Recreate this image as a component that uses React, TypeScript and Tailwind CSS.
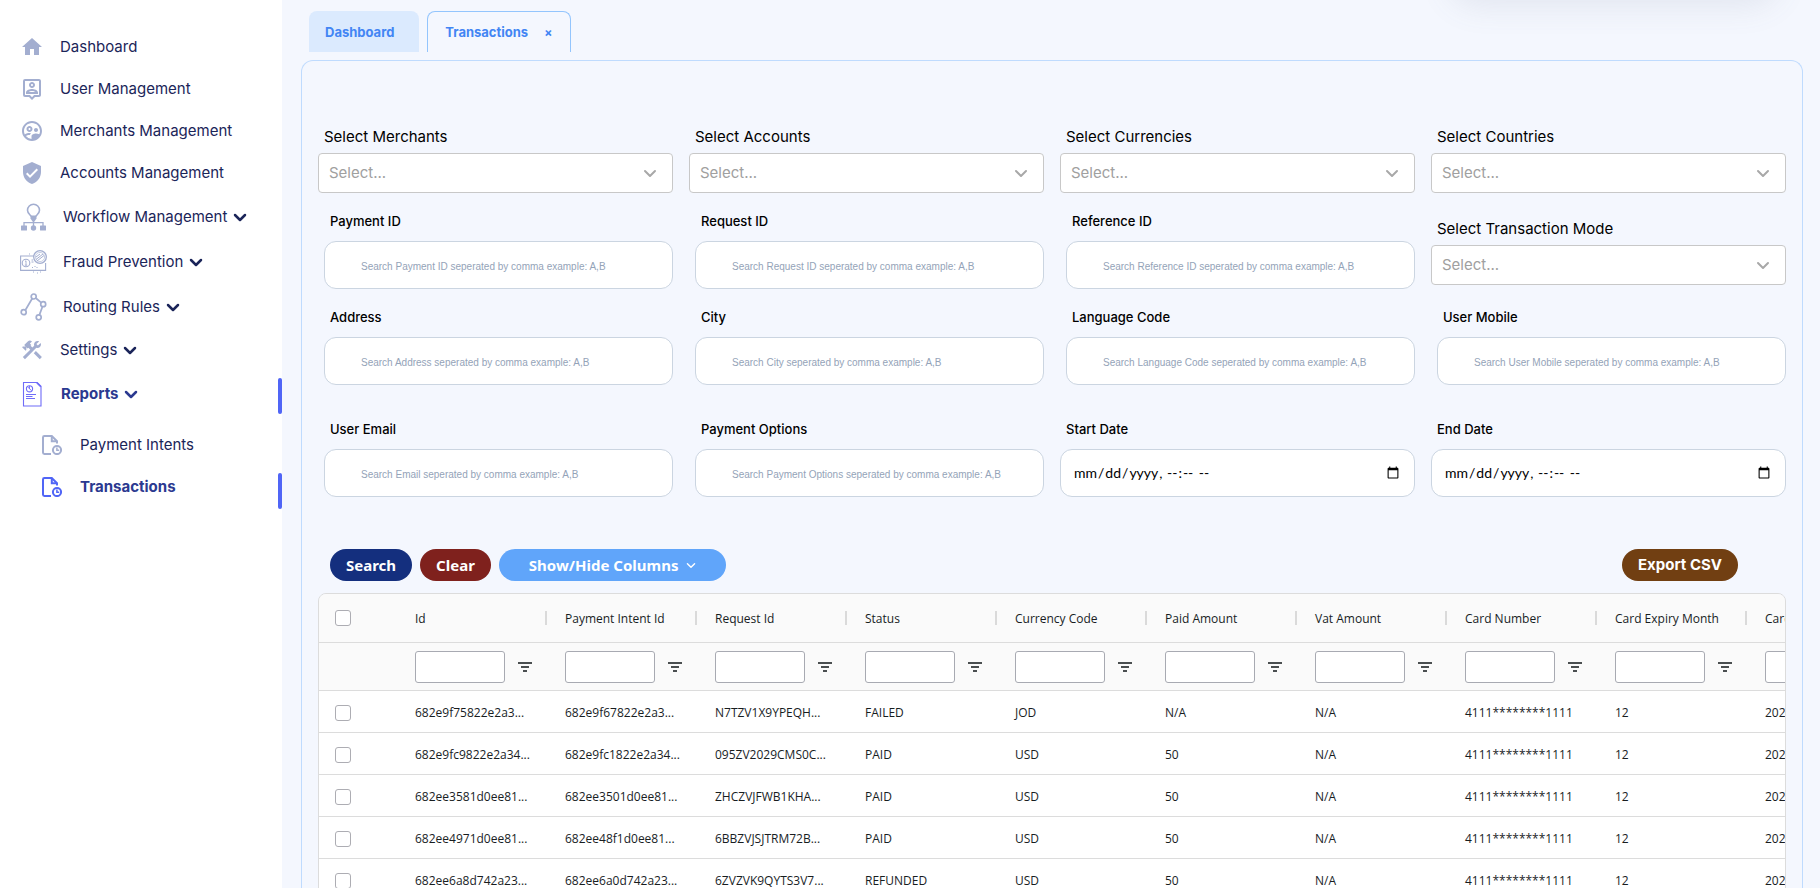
import type { ReactNode } from "react";
import {
  MdConstruction,
  MdHome,
  MdOutlinePersonPin,
  MdOutlineSupervisedUserCircle,
  MdVerifiedUser,
} from "react-icons/md";

function Chevron({ className }: { className?: string }) {
  return (
    <svg className={className} viewBox="0 0 14 9" fill="none" stroke="currentColor" strokeLinecap="round" strokeLinejoin="round" aria-hidden="true">
      <path d="M2 2l5 5 5-5" />
    </svg>
  );
}

function WorkflowIcon() {
  return (
    <svg className="h-[28px] w-[27px]" viewBox="0 0 27 28" fill="none" stroke="currentColor" aria-hidden="true">
      <path d="M11.2 13.6c-.3-1.700-3.700-2.800-3.700-6.300a6 6 0 0 1 12 0c0 3.500-3.400 4.600-3.700 6.300" strokeWidth="1.600" />
      <path d="M10.500 12.500h6v3l-2 3h-2l-2-3z" fill="currentColor" stroke="none" />
      <path d="M13.500 18v5M4 23v-3.300h19V23" strokeWidth="1.300" />
      <rect x="1" y="22.500" width="6" height="5" rx=".5" fill="currentColor" stroke="none" />
      <circle cx="13.500" cy="25" r="2.700" fill="currentColor" stroke="none" />
      <rect x="20" y="22.500" width="6" height="5" rx=".5" fill="currentColor" stroke="none" />
    </svg>
  );
}

function FraudIcon() {
  return (
    <svg className="h-[24px] w-[27px]" viewBox="0 0 27 24" fill="none" stroke="currentColor" aria-hidden="true">
      <path d="M14 6H.6v14.400h25V13" strokeWidth="1.100" />
      <circle cx="6" cy="13" r="3.800" strokeWidth="1.100" />
      <path d="M6 10.800v4.400M5 11.500l1-.7M4.800 15.200h2.400" strokeWidth=".9" />
      <circle cx="20" cy="7" r="6.300" strokeWidth="1.300" />
      <circle cx="20" cy="7" r="4.600" strokeWidth=".6" />
      <path d="M16 9.500l7-5.500M17 11l7-5.500M16 7l4-3" strokeWidth="1" />
      <path d="M11.500 10h1.500M11.500 12h2M12 17.500h1M14.500 16.500h1M16.500 17.500h1M9.500 3.500v1M17.500 22.500v1M13 22h1M20.500 21.500v1" strokeWidth="1" />
    </svg>
  );
}

function RoutingIcon() {
  return (
    <svg className="h-[28px] w-[27px]" viewBox="0 0 27 28" fill="none" stroke="currentColor" strokeWidth="1.700" aria-hidden="true">
      <circle cx="13.700" cy="3.500" r="2.500" />
      <circle cx="23.200" cy="11.200" r="2.500" />
      <circle cx="3.700" cy="19.200" r="2.500" />
      <circle cx="18.700" cy="24.300" r="2.500" />
      <path d="M12.200 5.500L5.300 17.200M15.700 5l5.500 4.600M22.500 13.600l-3.100 8.300" />
    </svg>
  );
}

function ReportIcon() {
  return (
    <svg className="h-[25px] w-[25px]" viewBox="0 0 25 25" fill="none" stroke="currentColor" aria-hidden="true">
      <path d="M3.500.5h13.700l3.800 3.800v19.700H3.500z" strokeWidth="1.100" />
      <path d="M16.800.7l4 4" strokeWidth="1.500" />
      <circle cx="9.500" cy="6.800" r="3.100" strokeWidth="1.100" />
      <path d="M7.500 4.800l4.200 4M9.500 6.800V4" strokeWidth=".9" />
      <path d="M6 12.500h10M6 14.500h6.500M6 16.500h9" strokeWidth="1" />
    </svg>
  );
}

function FileClockIcon() {
  return (
    <svg className="size-5" viewBox="0 0 20 20" fill="none" stroke="currentColor" strokeWidth="2" aria-hidden="true">
      <path d="M9 19H2.400A1.400 1.400 0 0 1 1 17.600V2.400A1.400 1.400 0 0 1 2.400 1h7.400L15 6.200v2.300" />
      <path d="M9.800 1v5.200h5.200" />
      <circle cx="15" cy="15" r="4.100" />
      <path d="M14.900 12.600v2.600h2.300" strokeWidth="1.500" />
    </svg>
  );
}

function FilterIcon() {
  return (
    <svg className="h-[10px] w-[14px]" viewBox="0 0 14 10" fill="currentColor" aria-hidden="true">
      <rect x="0" y="0" width="14" height="2" />
      <rect x="3" y="4" width="8" height="2" />
      <rect x="5" y="8" width="4" height="2" />
    </svg>
  );
}

type NavProps = { icon: ReactNode; label: string; expandable?: boolean; tall?: boolean; active?: boolean };

function NavItem({ icon, label, expandable, tall, active }: NavProps) {
  return (
    <li className="relative">
      <a
        href="#"
        className={`flex items-center gap-4 pl-5 ${tall ? "h-[45px] pt-px" : "h-[42px]"} ${active ? "font-bold text-[#2b3990]" : "text-[#1b2559]"}`}
      >
        <span className={active ? "text-[#6f6cf8]" : "text-[#a3aed0]"}>{icon}</span>
        <span className="flex items-center gap-1.5">
          {label}
          {expandable && <Chevron className="h-[9px] w-[14px] stroke-[2.500]" />}
        </span>
      </a>
      {active && <span className="absolute top-[7px] right-0 h-9 w-1 rounded-sm bg-[#5065f6]" />}
    </li>
  );
}

function SubNavItem({ label, active }: { label: string; active?: boolean }) {
  return (
    <li className="relative">
      <a
        href="#"
        className={`flex h-[42px] items-center gap-[18px] pl-[42px] ${active ? "font-bold text-[#2b3990]" : "text-[#1b2559]"}`}
      >
        <span className={active ? "text-[#5065f6]" : "text-[#a3aed0]"}>
          <FileClockIcon />
        </span>
        {label}
      </a>
      {active && <span className="absolute top-[7px] right-0 h-9 w-1 rounded-sm bg-[#5065f6]" />}
    </li>
  );
}

function Sidebar() {
  return (
    <nav className="w-[282px] shrink-0 bg-white pt-[26px] text-[15px]">
      <ul>
        <NavItem icon={<MdHome size={24} />} label="Dashboard" />
        <NavItem icon={<MdOutlinePersonPin size={24} />} label="User Management" />
        <NavItem icon={<MdOutlineSupervisedUserCircle size={24} />} label="Merchants Management" />
        <NavItem icon={<MdVerifiedUser size={24} />} label="Accounts Management" />
        <NavItem icon={<WorkflowIcon />} label="Workflow Management" expandable tall />
        <NavItem icon={<FraudIcon />} label="Fraud Prevention" expandable tall />
        <NavItem icon={<RoutingIcon />} label="Routing Rules" expandable tall />
        <NavItem icon={<MdConstruction size={24} />} label="Settings" expandable />
        <NavItem icon={<ReportIcon />} label="Reports" expandable tall active />
      </ul>
      <ul className="pt-2">
        <SubNavItem label="Payment Intents" />
        <SubNavItem label="Transactions" active />
      </ul>
    </nav>
  );
}

function SelectField({ id, label }: { id: string; label: string }) {
  return (
    <div className="flex flex-col gap-1">
      <label htmlFor={id} className="pl-1.5 text-[15px] leading-6 text-black">
        {label}
      </label>
      <div className="relative">
        <select id={id} className="h-10 w-full appearance-none rounded border border-[#c8c8c8] bg-white px-2.5 text-[15px] text-[#a0a0a0]">
          <option>Select...</option>
        </select>
        <Chevron className="pointer-events-none absolute top-4 right-4 h-[9px] w-[14px] stroke-2 text-[#a8a8a8]" />
      </div>
    </div>
  );
}

function TextField({ id, label, hint }: { id: string; label: string; hint: string }) {
  return (
    <div className="flex flex-col gap-2.5 pt-1.5 pl-1.5">
      <label htmlFor={id} className="pl-1.5 text-[13px] leading-5 font-medium text-black">
        {label}
      </label>
      <input
        id={id}
        type="text"
        placeholder={`Search ${hint} seperated by comma example: A,B`}
        className="h-12 w-full rounded-xl border border-[#cbd5e1] bg-white pt-0.5 pr-3 pl-9 font-['Liberation_Sans',sans-serif] text-[10px] placeholder:text-[#94a3b8]"
      />
    </div>
  );
}

function DateField({ id, label }: { id: string; label: string }) {
  return (
    <div className="flex flex-col gap-2.5 pt-1.5">
      <label htmlFor={id} className="pl-1.5 text-[13px] leading-5 font-medium text-black">
        {label}
      </label>
      <input
        id={id}
        type="datetime-local"
        className="h-12 w-full rounded-xl border border-[#cbd5e1] bg-white px-3 font-[Lato,sans-serif] text-sm text-black"
      />
    </div>
  );
}

const columns = [
  "Id",
  "Payment Intent Id",
  "Request Id",
  "Status",
  "Currency Code",
  "Paid Amount",
  "Vat Amount",
  "Card Number",
  "Card Expiry Month",
  "Card Expiry Year",
];

const rows = [
  ["682e9f75822e2a3...", "682e9f67822e2a3...", "N7TZV1X9YPEQH...", "FAILED", "JOD", "N/A", "N/A", "4111********1111", "12", "2025"],
  ["682e9fc9822e2a34...", "682e9fc1822e2a34...", "095ZV2029CMS0C...", "PAID", "USD", "50", "N/A", "4111********1111", "12", "2025"],
  ["682ee3581d0ee81...", "682ee3501d0ee81...", "ZHCZVJFWB1KHA...", "PAID", "USD", "50", "N/A", "4111********1111", "12", "2025"],
  ["682ee4971d0ee81...", "682ee48f1d0ee81...", "6BBZVJSJTRM72B...", "PAID", "USD", "50", "N/A", "4111********1111", "12", "2025"],
  ["682ee6a8d742a23...", "682ee6a0d742a23...", "6ZVZVK9QYTS3V7...", "REFUNDED", "USD", "50", "N/A", "4111********1111", "12", "2025"],
];

function Check({ label }: { label: string }) {
  return (
    <input
      type="checkbox"
      aria-label={label}
      className="block size-4 appearance-none rounded-[3px] border border-[#adadb3] bg-white checked:bg-blue-500"
    />
  );
}

function TransactionsTable() {
  return (
    <div className="mt-3 overflow-x-auto rounded-lg border border-[#dcdcdc] bg-white [scrollbar-width:none]">
      <table className="w-[1578px] table-fixed border-separate border-spacing-0 text-left font-['Open_Sans',sans-serif] text-xs text-[#181d1f]">
        <colgroup>
          <col className="w-[78px]" />
          {columns.map((c) => (
            <col key={c} className="w-[150px]" />
          ))}
        </colgroup>
        <thead className="bg-[#fafafa]">
          <tr className="h-[49px]">
            <th className="border-b border-[#dcdcdc] pl-4">
              <Check label="Select all rows" />
            </th>
            {columns.map((c) => (
              <th key={c} className="border-b border-[#dcdcdc] pl-[18px] font-normal">
                <span className="flex items-center justify-between whitespace-nowrap">
                  <span className="pt-0.5">{c}</span>
                  <span className="h-3.5 w-0.5 bg-[#dadada]" />
                </span>
              </th>
            ))}
          </tr>
          <tr className="h-12">
            <td className="border-b border-[#dcdcdc]" />
            {columns.map((c) => (
              <td key={c} className="border-b border-[#dcdcdc] pr-[15px] pl-[18px]">
                <span className="flex items-center justify-between">
                  <input
                    type="text"
                    aria-label={`Filter ${c}`}
                    className="h-8 w-[90px] rounded-[3px] border border-[#a8aab2] bg-white px-1.5"
                  />
                  <button type="button" aria-label={`Open filter for ${c}`} className="p-0.5 pr-0 text-[#4a4e50]">
                    <FilterIcon />
                  </button>
                </span>
              </td>
            ))}
          </tr>
        </thead>
        <tbody>
          {rows.map((row) => (
            <tr key={row[0]} className="h-[42px]">
              <td className="border-b border-[#dcdcdc] pt-0.5 pl-4">
                <Check label={`Select ${row[0]}`} />
              </td>
              {row.map((cell, i) => (
                <td key={i} className="border-b border-[#dcdcdc] pt-0.5 pl-[18px] whitespace-nowrap">
                  {cell}
                </td>
              ))}
            </tr>
          ))}
        </tbody>
      </table>
    </div>
  );
}

export default function App() {
  return (
    <div className="flex h-screen overflow-hidden bg-[#f4f7fe] font-[Inter,sans-serif]">
      <Sidebar />
      <main className="relative min-w-0 flex-1 overflow-y-auto pt-[11px] pr-[17px] pl-[19px] [scrollbar-width:none]">
        <div className="absolute -top-16 right-10 h-16 w-[332px] rounded-[30px] shadow-[0_6px_32px_rgba(100,105,130,0.12)]" />
        <div className="flex gap-2 pl-2 text-[13px] font-bold text-[#4285f4]">
          <a href="#" className="flex h-[41px] items-center rounded-t-lg bg-[#dbeafe] pt-0.5 pr-[25px] pl-4">
            Dashboard
          </a>
          <div className="flex h-[41px] items-center gap-3 rounded-t-lg border border-b-0 border-[#93c5fd] pt-px pr-3.5 pl-[17px]">
            <a href="#">Transactions</a>
            <button type="button" aria-label="Close Transactions" className="px-1 text-xs">
              ×
            </button>
          </div>
        </div>
        <section className="mt-2 rounded-t-xl border border-b-0 border-[#bfdbfe] px-4 pt-16">
          <div className="grid grid-cols-4 gap-x-4 gap-y-3">
            <SelectField id="merchants" label="Select Merchants" />
            <SelectField id="accounts" label="Select Accounts" />
            <SelectField id="currencies" label="Select Currencies" />
            <SelectField id="countries" label="Select Countries" />
            <TextField id="payment-id" label="Payment ID" hint="Payment ID" />
            <TextField id="request-id" label="Request ID" hint="Request ID" />
            <TextField id="reference-id" label="Reference ID" hint="Reference ID" />
            <div className="pt-3">
              <SelectField id="mode" label="Select Transaction Mode" />
            </div>
            <TextField id="address" label="Address" hint="Address" />
            <TextField id="city" label="City" hint="City" />
            <TextField id="language" label="Language Code" hint="Language Code" />
            <TextField id="mobile" label="User Mobile" hint="User Mobile" />
          </div>
          <div className="mt-7 grid grid-cols-4 gap-x-4">
            <TextField id="email" label="User Email" hint="Email" />
            <TextField id="options" label="Payment Options" hint="Payment Options" />
            <DateField id="start" label="Start Date" />
            <DateField id="end" label="End Date" />
          </div>
          <div className="mt-[52px] flex items-center justify-between pr-12 pl-3 text-[15px] font-bold text-white">
            <div className="flex gap-2 font-['Noto_Sans',sans-serif]">
              <button type="button" className="h-8 rounded-full bg-[#142f7e] px-4">
                Search
              </button>
              <button type="button" className="h-8 rounded-full bg-[#7f211d] px-4">
                Clear
              </button>
              <button type="button" className="flex h-8 items-center gap-2 rounded-full bg-[#60a5fa] px-[30px]">
                Show/Hide Columns
                <Chevron className="h-[7px] w-[10px] stroke-2" />
              </button>
            </div>
            <button type="button" className="h-8 rounded-full bg-[#713f12] px-4">
              Export CSV
            </button>
          </div>
          <TransactionsTable />
        </section>
      </main>
    </div>
  );
}
